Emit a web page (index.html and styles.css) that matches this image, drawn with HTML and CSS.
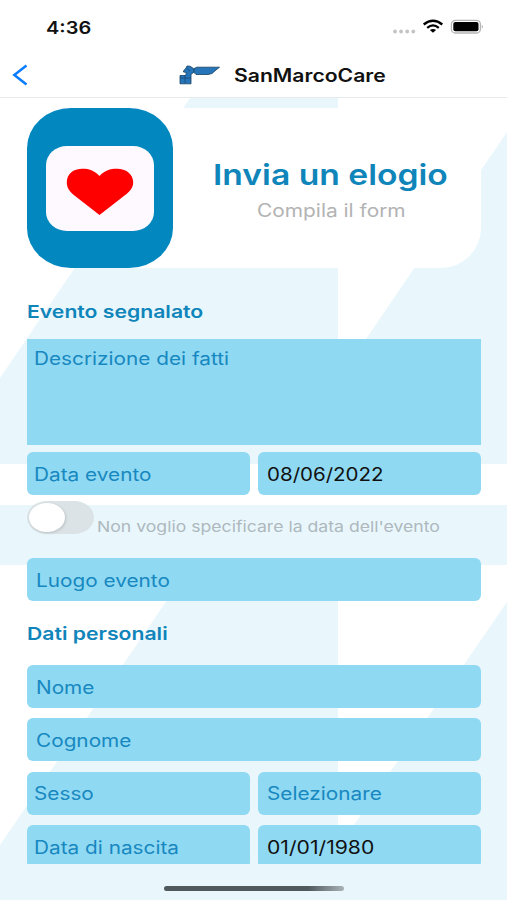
FILE: index.html
```
<!DOCTYPE html>
<html lang="it">
<head>
    <meta charset="UTF-8">
    <meta name="viewport" content="width=device-width, initial-scale=1.0">
    <title>SanMarcoCare</title>
    <link rel="stylesheet" href="styles.css">
</head>
<body>
<div class="screen">
    <svg class="backdrop" viewBox="0 0 507 900">
        <path d="M190 98H338V380L507 132V464H0V378Z"/>
        <path d="M0 505H507V565H0Z"/>
        <path d="M191 565H338V848L507 602V900H0V845Z"/>
    </svg>

    <div class="status-bar">
        <span class="time wide">4:36</span>
        <svg class="status-icons" width="92" height="20" viewBox="0 0 92 20">
            <g fill="#c4c4c6">
                <circle cx="4" cy="13.5" r="1.9"/>
                <circle cx="10.1" cy="13.5" r="1.9"/>
                <circle cx="16.2" cy="13.5" r="1.9"/>
                <circle cx="22.3" cy="13.5" r="1.9"/>
            </g>
            <g fill="none" stroke="#000" stroke-width="2.3">
                <path d="M32.7 6.5Q42 -0.9 51.3 6.5"/>
                <path d="M36.2 9.8Q42 5 47.8 9.8"/>
            </g>
            <path d="M38.9 12.1Q42 9.9 45.1 12.1L42 14.8Z"/>
            <rect x="60.4" y="2.4" width="29" height="12.6" rx="3.8" fill="#fff" stroke="#b5b5b5" stroke-width="1.3"/>
            <rect x="62.3" y="4.1" width="25.2" height="9.2" rx="2"/>
            <path d="M90.8 6.8Q92.6 8.7 90.8 10.6Z" fill="#999"/>
        </svg>
    </div>

    <div class="nav-bar">
        <svg class="back" width="17" height="24" viewBox="0 0 17 24">
            <path d="M14.5 2.5L2.3 12L14.5 21.5" fill="none" stroke="#0a7cff" stroke-width="2.5"/>
        </svg>
        <svg class="logo" width="42" height="20" viewBox="0 0 42 20">
            <g fill="#2675b8" stroke="#173f60" stroke-width="0.8">
                <path d="M15 3.5L18 2.2H40.5L37 5L33 8.5L29 9.5H17L14.5 7Z"/>
                <path d="M4.5 6L7 3L8 1L11 1.2L14.5 3.5L15 7L12 9.5L12 18.8H1V10.5H6.5L7.5 7.5L4.5 7Z"/>
            </g>
            <path d="M1 13H12M6 10V18M8 3.5L11 6" fill="none" stroke="#174a78" stroke-width="0.8"/>
        </svg>
        <span class="app-name wide">SanMarcoCare</span>
    </div>

    <div class="content">
        <div class="hero">
            <div class="hero-icon">
                <div class="hero-card">
                    <svg width="68" height="48" viewBox="0 0 68 48">
                        <path d="M33.5 8C28 2.5 23 .8 16.5 .8C7 .8 .8 6 .8 14.5C.8 21 5 25 11 29.5L33.5 47L56 29.5C62 25 67.2 21 67.2 14.5C67.2 6 60 .8 51 .8C44 .8 39 2.5 33.5 8Z" fill="#f00"/>
                    </svg>
                </div>
            </div>
            <div class="hero-text">
                <h1><span class="wide">Invia un elogio</span></h1>
                <p><span class="wide">Compila il form</span></p>
            </div>
        </div>

        <h2 class="event-title"><span class="wide">Evento segnalato</span></h2>
        <div class="textarea"><span class="wide">Descrizione dei fatti</span></div>
        <div class="row event-date">
            <div class="field label"><span class="wide">Data evento</span></div>
            <div class="field value"><span class="wide">08/06/2022</span></div>
        </div>
        <div class="toggle-row">
            <div class="switch"><div class="knob"></div></div>
            <span class="note wide">Non voglio specificare la data dell'evento</span>
        </div>
        <div class="field"><span class="wide">Luogo evento</span></div>

        <h2 class="personal-title"><span class="wide">Dati personali</span></h2>
        <div class="personal">
            <div class="field"><span class="wide">Nome</span></div>
            <div class="field"><span class="wide">Cognome</span></div>
            <div class="row">
                <div class="field label"><span class="wide">Sesso</span></div>
                <div class="field"><span class="wide">Selezionare</span></div>
            </div>
            <div class="row">
                <div class="field label"><span class="wide">Data di nascita</span></div>
                <div class="field value birth"><span class="wide">01/01/1980</span></div>
            </div>
        </div>
    </div>

    <div class="home-area"><div class="home-indicator"></div></div>
</div>
</body>
</html>
```
FILE: styles.css
```
* { box-sizing: border-box; }
body {
    margin: 0;
    font-family: Inter, "Liberation Sans", sans-serif;
    font-size: 18px;
    color: #1788c0;
}
h1, h2, p { margin: 0; }

.screen {
    position: relative;
    width: 507px;
    height: 900px;
    overflow: hidden;
    display: flex;
    flex-direction: column;
    background: #fff;
}
.backdrop {
    position: absolute;
    top: 0;
    left: 0;
    width: 507px;
    height: 900px;
    fill: #e9f7fd;
}
.status-bar, .nav-bar, .content, .home-area { position: relative; }

/* extended lettering */
.wide {
    display: inline-block;
    white-space: nowrap;
    transform: scaleX(1.175);
    transform-origin: left center;
}
h1 .wide, .hero-text p .wide { transform: scaleX(1.16); }
h2 .wide { transform: scaleX(1.21); }
.field .wide, .textarea .wide { transform: scaleX(1.154); }
.value .wide { transform: scaleX(1.14); }
.birth .wide { transform: scaleX(1.175); }

.status-bar {
    height: 52px;
    padding: 18px 24px 0 46px;
    display: flex;
    justify-content: space-between;
}
.time {
    font-size: 17px;
    font-weight: 600;
    line-height: 21px;
    color: #111;
}

.nav-bar {
    height: 46px;
    padding: 1px 0 0 12px;
    display: flex;
    align-items: center;
    background: #fff;
    border-bottom: 1px solid #e6eaec;
}
.logo { margin-left: 150px; }
.app-name {
    margin-left: 13px;
    font-weight: 600;
    color: #111;
}

.content {
    height: 766px;
    padding: 10px 26px 0 27px;
    overflow: hidden;
}
.hero {
    height: 160px;
    display: flex;
    background: #fff;
    border-radius: 44px 44px 40px 44px / 50px 44px 40px 50px;
}
.hero-icon {
    width: 146px;
    height: 160px;
    padding: 38px 0 0 19px;
    background: #0287be;
    border-radius: 44px / 40px;
}
.hero-card {
    width: 108px;
    height: 85px;
    padding: 22px 0 0 20px;
    background: #fdf9ff;
    border-radius: 21px / 19px;
}
.hero-card svg { display: block; }
.hero-text { padding: 49px 0 0 40px; }
h1 {
    font-size: 29px;
    font-weight: 600;
    line-height: 36px;
    color: #0f85ba;
}
.hero-text p {
    margin: 7px 0 0 44px;
    line-height: 22px;
    color: #b3b3b3;
}

h2 {
    font-size: 17.5px;
    font-weight: 600;
    line-height: 22px;
    color: #0f85ba;
}
.event-title { margin: 33px 0 16px; }
.personal-title { margin: 22px 0 20px; }

.textarea {
    height: 106px;
    padding: 9px 7px;
    line-height: 22px;
    background: #90d9f3;
}
.row {
    display: grid;
    grid-template-columns: 1fr 1fr;
    gap: 8px;
}
.field {
    height: 43px;
    padding: 1px 0 0 9px;
    display: flex;
    align-items: center;
    background: #90d9f3;
    border-radius: 6px;
}
.label { padding-left: 7px; }
.value { color: #111; }
.event-date { margin-top: 7px; }

.toggle-row {
    height: 63px;
    padding-top: 6px;
    display: flex;
}
.switch {
    width: 67px;
    height: 33px;
    padding: 2px;
    background: #dbe3e6;
    border-radius: 20px / 16.5px;
}
.knob {
    width: 36px;
    height: 29px;
    background: #fff;
    border-radius: 50%;
    box-shadow: 1px 1px 3px rgba(0, 0, 0, 0.15);
}
.note {
    margin: 16px 0 0 3px;
    font-size: 15px;
    line-height: 20px;
    color: #aeb8bd;
}

.personal {
    display: grid;
    row-gap: 10.4px;
}

.home-area {
    flex: 1;
    display: flex;
    justify-content: center;
    padding-top: 22px;
}
.home-indicator {
    width: 180px;
    height: 5px;
    border-radius: 3px;
    background: linear-gradient(90deg, #505a5d 0%, #505a5d 80%, #a9b3b7 100%);
}
```
